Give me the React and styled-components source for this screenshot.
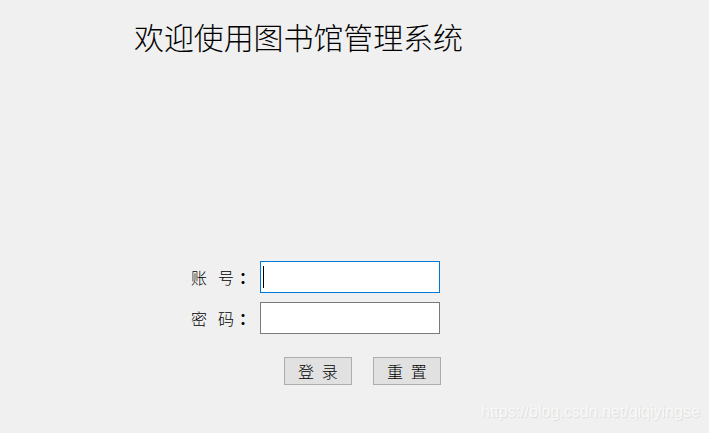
import React from "react";
import styled, { createGlobalStyle } from "styled-components";

const Global = createGlobalStyle`
  html, body { margin: 0; padding: 0; background: #f0f0f0; }
  body { width: 709px; height: 433px; overflow: hidden; font-family: "Noto Sans CJK SC", "Liberation Sans", sans-serif; }
`;

const Page = styled.div`
  position: relative;
  width: 709px;
  height: 433px;
  background: #f0f0f0;
  display: flex;
  flex-direction: column;
`;

const Title = styled.h1`
  margin: 0;
  padding: 20px 0 0 134px;
  font-size: 30px;
  line-height: 32px;
  font-weight: 300;
  color: #000;
  letter-spacing: -0.1px;
`;

const Form = styled.div`
  margin-top: 209px;
  display: flex;
  flex-direction: column;
  gap: 9px;
  padding-left: 191px;
`;

const Row = styled.div`
  display: flex;
  align-items: center;
  height: 32px;
`;

const Label = styled.label`
  width: 69px;
  display: flex;
  align-items: center;
  font-size: 16px;
  font-weight: 300;
  color: #000;
`;

const Char = styled.span`
  margin-right: ${(p) => p.$gap || 0}px;
`;

const Colon = styled.span`
  font-weight: 700;
  font-size: 16px;
`;

const Input = styled.div`
  box-sizing: border-box;
  width: 180px;
  height: 32px;
  background: #fff;
  border: 1px solid ${(p) => (p.$focused ? "#0078d7" : "#7a7a7a")};
  display: flex;
  align-items: center;
  padding-left: 2px;
`;

const Caret = styled.span`
  display: block;
  width: 1px;
  height: 22px;
  background: #000;
`;

const Buttons = styled.div`
  display: flex;
  gap: 21px;
  margin-top: 23px;
  padding-left: 284px;
`;

const Button = styled.button`
  box-sizing: border-box;
  width: 68px;
  height: 28px;
  background: #e1e1e1;
  border: 1px solid #adadad;
  font-family: "Noto Sans CJK SC", sans-serif;
  font-size: 16px;
  font-weight: 300;
  color: #000;
  padding: 0 0 0 2px;
  letter-spacing: 2.2px;
  white-space: pre;
`;

const Watermark = styled.div`
  position: absolute;
  left: 481px;
  top: 403px;
  font-family: "Liberation Sans", Arial, sans-serif;
  font-size: 16px;
  color: #f9f9f9;
  text-shadow: 1px 1px 1px #dcdcdc;
`;

export default function App() {
  return (
    <Page>
      <Global />
      <Title>欢迎使用图书馆管理系统</Title>
      <Form>
        <Row>
          <Label>
            <Char $gap={11}>账</Char>
            <Char $gap={5}>号</Char>
            <Colon>：</Colon>
          </Label>
          <Input $focused>
            <Caret />
          </Input>
        </Row>
        <Row>
          <Label>
            <Char $gap={11}>密</Char>
            <Char $gap={5}>码</Char>
            <Colon>：</Colon>
          </Label>
          <Input />
        </Row>
      </Form>
      <Buttons>
        <Button>{"登 录"}</Button>
        <Button>{"重 置"}</Button>
      </Buttons>
      <Watermark>https://blog.csdn.net/qiqiyingse</Watermark>
    </Page>
  );
}
